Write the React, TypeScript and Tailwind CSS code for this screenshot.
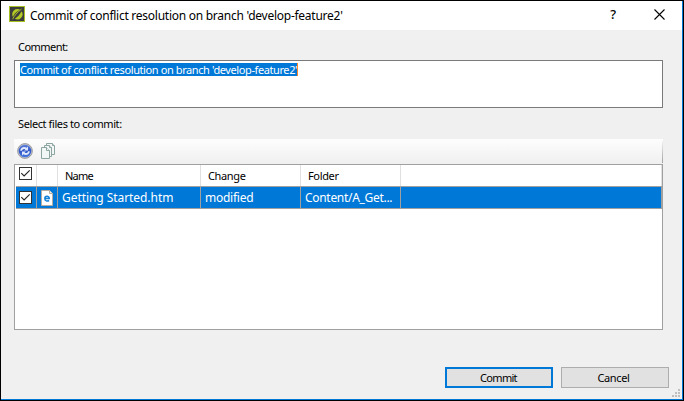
import type { ReactNode } from "react";

function Check() {
  return (
    <span className="flex h-[13px] w-[13px] items-center justify-center border border-[#333] bg-white">
      <svg width="11" height="11" viewBox="0 0 11 11" fill="none" stroke="#222" strokeWidth="1.1">
        <path d="M1.300 5.200 4.100 8 9.700 2.400" />
      </svg>
    </span>
  );
}

function Logo() {
  return (
    <svg width="16" height="16" viewBox="0 0 16 16">
      <rect width="16" height="16" fill="#a9be22" />
      <rect x="1" y="1" width="14" height="14" fill="#3b3d3c" />
      <path d="M9 3a5.200 5.200 0 0 0-5.800 5.500c0 1 .3 1.800.8 2.500C4.600 8.500 7 6 11 3.700A5 5 0 0 0 9 3Z" fill="#b4c924" />
      <path d="M12.600 5.200a5.200 5.200 0 0 1-6.800 7.500C8.600 11 10.800 8.600 12.600 5.200Z" fill="#b4c924" />
      <path d="M3.600 13.200C5.500 9.500 8 6.500 12.600 3" stroke="#b4c924" fill="none" strokeWidth=".9" />
    </svg>
  );
}

function Refresh() {
  return (
    <svg width="16" height="16" viewBox="0 0 16 16">
      <defs>
        <linearGradient id="ball" x1="0" y1="0" x2="0" y2="1">
          <stop offset="0" stopColor="#5f80dc" />
          <stop offset=".5" stopColor="#2f56c8" />
          <stop offset="1" stopColor="#4a7ae0" />
        </linearGradient>
      </defs>
      <circle cx="8" cy="8" r="7.400" fill="#c2c4cc" stroke="#96979c" strokeWidth=".9" />
      <circle cx="8" cy="8" r="6.300" fill="url(#ball)" />
      <path d="M3.200 7.800C3.200 4.400 7 2.900 9.700 4.700L11 3.600v3.900H7.200L8.400 6.200C6.800 5.400 5.200 6.200 5 7.800Z" fill="#dfe8fc" />
      <path d="M12.800 8.200c0 3.400-3.800 4.900-6.500 3.100L5 12.400V8.500h3.800L7.600 9.800c1.600.8 3.200 0 3.400-1.600Z" fill="#dfe8fc" />
    </svg>
  );
}

function Pages() {
  return (
    <svg width="15" height="16" viewBox="0 0 15 16" fill="#f2f6f5" stroke="#8da5a1">
      <path d="M5.500.5h6l2 2v9h-8Z" />
      <path d="M11.500.5v2h2" />
      <path d="M3.500 2.500h5l2 2v9h-7Z" />
      <path d="M8.500 2.500v2h2" />
      <path d="M.5 4.500h5l3 3v8h-8Z" />
      <path d="M5.500 4.500v3h3" />
    </svg>
  );
}

function HtmlFile() {
  return (
    <svg width="12" height="16" viewBox="0 0 12 16">
      <path d="M.5.5h8l3 3v12H.5Z" fill="#fff" stroke="#b5aca2" />
      <path d="M8.500.5v3h3" fill="#eee" stroke="#b5aca2" />
      <path d="M3.800 8.400h4.500C8.300 5.600 3.800 5.600 3.800 8.600c0 2.600 2.600 2.900 4.300 1.900" fill="none" stroke="#1683d8" strokeWidth="1.500" />
    </svg>
  );
}

function Label({ className, children }: { className: string; children: ReactNode }) {
  return <span className={"whitespace-pre " + className}>{children}</span>;
}

export default function App() {
  return (
    <div className="flex h-[401px] w-[684px] flex-col border border-black bg-[#f0f0f0] font-['Noto_Sans',sans-serif] text-[11px] text-black">
      <div className="flex min-h-0 flex-1 flex-col border-r border-b border-[#0078d7]">
        <header className="flex h-[29px] shrink-0 items-center bg-white pl-2">
          <div className="-mt-[3px]"><Logo /></div>
          <Label className="ml-[5px] text-[12px] leading-[28px] tracking-[-0.26px]">Commit of conflict resolution on branch 'develop-feature2'</Label>
          <Label className="mr-[38px] ml-auto -mt-[2px] text-[13px] font-medium">?</Label>
          <svg width="11" height="11" viewBox="0 0 11 11" className="mr-[17px] -mt-[2px]" stroke="#000" strokeWidth="1.100">
            <path d="M.5.5l10 10M10.500.5l-10 10" />
          </svg>
        </header>

        <main className="flex min-h-0 flex-1 flex-col pr-[19px] pl-[13px]">
          <div className="flex h-[30px] items-center pt-[4px] pl-[4px]">
            <Label className="tracking-[-0.55px]">Comment:</Label>
          </div>
          <div className="h-[48px] border border-[#7a7a7a] bg-white pt-[2px] pl-[5px]">
            <div className="flex h-[13px] w-[278px] items-center border-r border-[#ff8728] bg-[#0078d7] text-white">
              <Label className="pt-px tracking-[-0.4px]">Commit of conflict resolution on branch 'develop-feature2'</Label>
            </div>
          </div>
          <div className="flex h-[31px] items-center pt-[2px] pl-[4px]">
            <Label className="tracking-[-0.4px]">Select files to commit:</Label>
          </div>
          <div className="flex h-[25px] items-center bg-linear-to-b from-[#fdfdfd] to-[#f0f0f0] pl-[3px]">
            <div className="mr-[8px] -mt-px"><Refresh /></div>
            <div className="-mt-px"><Pages /></div>
            <div className="ml-auto h-[22px] w-px bg-linear-to-b from-[#f4f4f4] to-[#a0a0a0]" />
          </div>
          <div className="h-[166px] border border-[#a0a0a0] bg-white pl-px">
            <div className="grid h-[21px] grid-cols-[21px_21px_143px_100px_100px_1fr] border-r border-[#e0e0e0] *:border-[#e0e0e0] [&>*:not(:last-child)]:border-r">
              <div className="pt-[2px] pl-[3px]"><Check /></div>
              <div />
              <div className="flex items-center pt-[2px] pl-[7px]"><Label className="tracking-[-0.8px]">Name</Label></div>
              <div className="flex items-center pt-[2px] pl-[7px]"><Label className="tracking-[-0.35px]">Change</Label></div>
              <div className="flex items-center pt-[2px] pl-[7px]"><Label className="tracking-[-0.35px]">Folder</Label></div>
              <div />
            </div>
            <div className="grid h-[23px] grid-cols-[21px_21px_143px_100px_100px_1fr] border-y border-r border-[#a0a0a0] bg-[#0078d7] text-[12px] text-white *:border-[#a0a0a0] [&>*:not(:last-child)]:border-r">
              <div className="pt-[4px] pl-[3px]"><Check /></div>
              <div className="pt-[3px] pl-[4px]"><HtmlFile /></div>
              <div className="flex items-center pl-[4px]"><Label className="tracking-[-0.06px]">Getting Started.htm</Label></div>
              <div className="flex items-center pl-[4px]"><Label className="tracking-[-0.25px]">modified</Label></div>
              <div className="flex items-center pl-[4px]"><Label className="tracking-[-0.300px]">Content/A_Get...</Label></div>
              <div />
            </div>
          </div>
        </main>

        <footer className="relative flex h-[69px] shrink-0 items-start justify-end gap-[8px] pt-[37px] pr-[13px]">
          <button className="flex h-[21px] w-[108px] items-center justify-center border-2 border-[#0078d7] bg-[#e1e1e1]"><Label className="pt-px pr-px tracking-[-0.7px]">Commit</Label></button>
          <button className="flex h-[21px] w-[108px] items-center justify-center border border-[#adadad] bg-[#e1e1e1]"><Label className="pt-px pr-[3px] tracking-[-0.35px]">Cancel</Label></button>
          <svg width="8" height="8" viewBox="0 0 8 8" fill="#bfbfbf" className="absolute right-[2px] bottom-[2px]">
            <path d="M6 0h2v2H6zM3 3h2v2H3zM6 3h2v2H6zM0 6h2v2H0zM3 6h2v2H3zM6 6h2v2H6z" />
          </svg>
        </footer>
      </div>
    </div>
  );
}
